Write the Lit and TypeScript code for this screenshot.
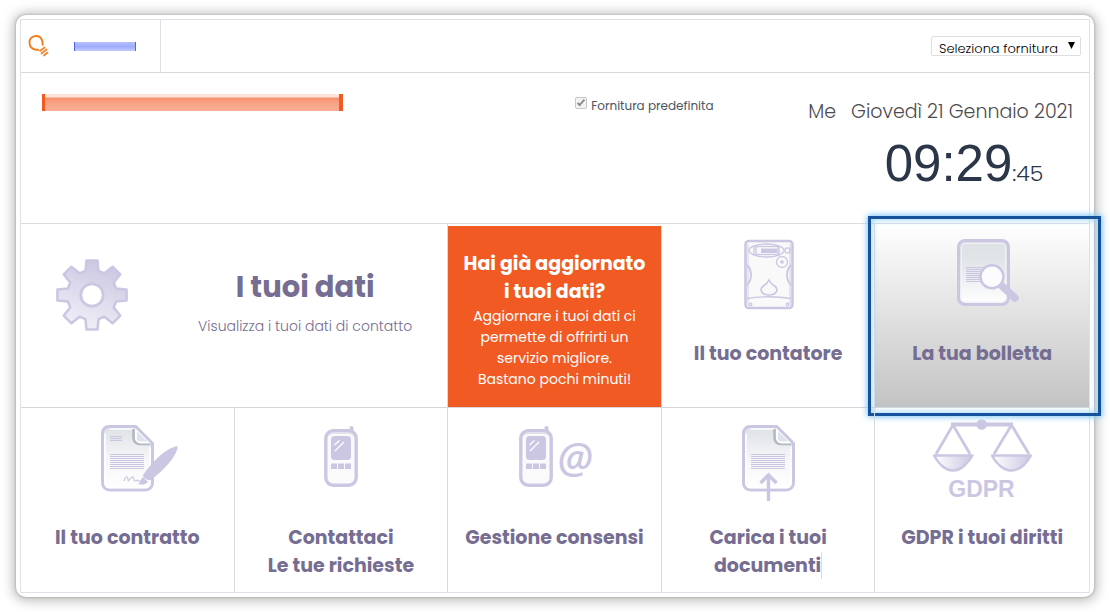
import { LitElement, html, svg, css, nothing } from "lit";
import { customElement, property } from "lit/decorators.js";

const INK = "#cbc7e3";

const gearTeeth = [0, 45, 90, 135, 180, 225, 270, 315];

const gearPath = (() => {
  const pts: string[] = [];
  for (const a of gearTeeth) {
    for (const [r, d] of [[25, -15], [35, -9], [35, 9], [25, 15]]) {
      const t = ((a + d) * Math.PI) / 180;
      pts.push(`${(37 + r * Math.sin(t)).toFixed(1)} ${(37 - r * Math.cos(t)).toFixed(1)}`);
    }
  }
  return `M${pts.join("L")}Z`;
})();

const gear = html`<svg width="74" height="74" viewBox="0 0 74 74" aria-hidden="true">
  <defs>
    <linearGradient id="gg" x1="0.7" y1="0" x2="0.35" y2="1">
      <stop offset="0" stop-color="#c9c5e1" />
      <stop offset="1" stop-color="#f1f0f7" />
    </linearGradient>
  </defs>
  <path d=${gearPath} fill="url(#gg)" stroke=${INK} stroke-width="2.5" stroke-linejoin="round" />
  <circle cx="37" cy="37" r="11.2" fill="#fff" stroke=${INK} stroke-width="2.8" />
</svg>`;

const lines = (x: number, w: number, y: number, n: number) =>
  Array.from({ length: n }, (_, i) => svg`<path d="M${x} ${y + i * 2}h${w}" stroke=${INK} stroke-width="1.1" />`);

const sheet = (x: number) => svg`
  <defs>
    <linearGradient id="sg" x1="0.2" y1="0" x2="0.2" y2="1">
      <stop offset="0" stop-color="#dde1e5" /><stop offset=".55" stop-color="#f7f7f9" /><stop offset="1" stop-color="#fff" />
    </linearGradient>
  </defs>
  <g transform="translate(${x} 9)">
    <path d="M8 1.5H34.500L51.500 18.500V58a7 7 0 0 1-7 7H8.500a7 7 0 0 1-7-7V8a6.500 6.500 0 0 1 6.500-6.500z" fill="url(#sg)" stroke=${INK} stroke-width="3" />
    <path d="M8.500 4H33M4 8.500V57a5 5 0 0 0 5 5.500H44a5 5 0 0 0 5-5V22" fill="none" stroke="#fff" stroke-width="1.500" />
    <path d="M32.500 4v9a6 6 0 0 0 6 6h11" fill="none" stroke="#98a4af" stroke-width="2.500" opacity=".7" />
    <path d="M35 4v9a4.500 4.500 0 0 0 4.500 4.500H49z" fill="#dfe2ea" stroke="#fff" stroke-width="1.800" />
    <path d="M34.500 1.500L51.500 18.500" stroke=${INK} stroke-width="2.500" />
  </g>`;

const phone = (x: number) => svg`
  <g transform="translate(${x} 10)">
    <rect x="25.500" y="0" width="4" height="8" rx="2" fill=${INK} />
    <rect x="1.800" y="4.800" width="30.400" height="54.400" rx="7.500" fill="#fafafb" stroke=${INK} stroke-width="3.400" />
    <path d="M5 10q1-2.500 4-2.500h16q3 0 4 2.500" fill="none" stroke="#e1dfec" stroke-width="1" />
    <rect x="7" y="10" width="20" height="24" rx="3.500" fill=${INK} />
    <path d="M10.500 19l5-4.500M11 25l9-9" stroke="#fff" stroke-width="1.300" />
    <path d="M7 37.500h6v5.500H7zM14 37.500h6v5.500h-6zM21 37.500h6v5.500h-6z" fill=${INK} />
  </g>`;

const contract = svg`${sheet(29)}
  ${lines(38, 12, 20.5, 3)}${lines(38, 34, 38.5, 8)}
  <path d="M52 65c1-4 4-6 4-2 0 5 3-3 5-2s0 4 2 4 2-2 4 0 4 1 5 0" fill="none" stroke=${INK} stroke-width="1.200" />
  <path d="M66 68c3-1 1-3 5-7l5 5c-3 3-6 3-10 2z" fill=${INK} />
  <path d="M71 59C79 48 90 35 103 30.500Q106 29.500 105.500 33C102 44 90 55 79 64Q76 65 73 62.500Q70.500 60.500 71 59z" fill=${INK} />`;

const upload = svg`${sheet(29)}${lines(38, 34, 38.5, 8)}
  <path d="M55.500 85V59M47.500 67L55.500 59l8 8" fill="none" stroke=${INK} stroke-width="3.400" />`;

const contact = phone(38);

const consent = svg`${phone(20)}<text x="76" y="57" text-anchor="middle" class="at">@</text>`;

const scales = svg`
  <defs><linearGradient id="pg"><stop offset="0" stop-color="#fff" /><stop offset="1" stop-color=${INK} /></linearGradient></defs>
  <path d="M24 8.500H86" stroke=${INK} stroke-width="4" />
  <circle cx="54.700" cy="8.500" r="5.300" fill=${INK} />
  <path d="M9 38L26 9L43 38M67 38L84.500 9L102 38" fill="none" stroke=${INK} stroke-width="2.800" />
  <path d="M7 39.500H45.500Q43 44 38 49Q26 60 14 49Q10 45 7 39.500z" fill="url(#pg)" stroke=${INK} stroke-width="2.400" stroke-linejoin="round" />
  <path d="M65 39.500H104Q101 45 97 49Q84.500 60 72 49Q67 44 65 39.500z" fill="url(#pg)" stroke=${INK} stroke-width="2.400" stroke-linejoin="round" />
  <text x="54.500" y="81" text-anchor="middle" class="gdpr">GDPR</text>`;

const meter = svg`
  <g fill="none" stroke=${INK} stroke-width="1.300">
    <rect x="32.500" y="9" width="47" height="67" rx="3.500" fill="#f9f9fa" stroke-width="2.600" />
    <path d="M35 12V73M77 12V73" stroke-width=".8" />
    <ellipse cx="53.500" cy="18.500" rx="17.500" ry="6.500" />
    <path d="M41 14v9M66 14v9" />
    <rect x="43" y="14.500" width="22" height="8" />
    <circle cx="74.500" cy="18.500" r="2.600" />
    <circle cx="69" cy="30" r="5.500" />
    <path d="M34 33q4 4 4 10t-4 10M78 33q-4 4-4 10t4 10" stroke-width="1.800" />
    <path d="M56 48q1.500 3.500 5 5.500c5 3 3.500 9.500-5 9.500s-10-6.500-5-9.500q3.500-2 5-5.500z" stroke-width="1.600" />
    <path d="M34 66.500q22-3.500 44 0" />
    <circle cx="37.500" cy="72.500" r="1.300" /><circle cx="74.500" cy="72.500" r="1.300" />
  </g>
  <rect x="48" y="16.500" width="16" height="4.500" fill=${INK} />
  <circle cx="69" cy="30" r="1.800" fill=${INK} />`;

const bill = svg`
  <defs>
    <linearGradient id="bg" x1="0" y1="0" x2="0" y2="1">
      <stop offset="0" stop-color="#dde1e4" /><stop offset=".35" stop-color="#e3e6e9" /><stop offset="1" stop-color="#fff" />
    </linearGradient>
  </defs>
  <rect x="31.600" y="8.600" width="49.800" height="63.800" rx="6.500" fill="url(#bg)" stroke=${INK} stroke-width="3.200" />
  <rect x="34.300" y="11.300" width="44.400" height="58.400" rx="4" fill="none" stroke="#f6f6f8" stroke-width="1" />
  ${lines(39, 18, 35.5, 8)}
  <path d="M75 54L88 66" stroke=${INK} stroke-width="7.500" stroke-linecap="round" />
  <circle cx="65" cy="44.700" r="11.500" fill="#fcfcfe" stroke=${INK} stroke-width="2.600" />`;

@customElement("service-tile")
class ServiceTile extends LitElement {
  @property({ attribute: false }) icon: unknown = nothing;
  @property({ attribute: false }) heading: string[] = [];
  @property({ type: Boolean, reflect: true }) active = false;
  @property({ type: Boolean }) caret = false;

  static styles = css`
    :host { display: block; position: relative; }
    .tile {
      display: flex; flex-direction: column; align-items: center; gap: 13px;
      box-sizing: border-box; height: 100%; padding-top: 8px;
      color: #756d92; text-decoration: none;
    }
    :host([active]) .tile { background: linear-gradient(#fff, #c3c3c3); }
    .title { margin: 0; font: 700 19px/28px Poppins, Inter, sans-serif; text-align: center; }
    .line { display: block; }
    .caret { border-right: 1px solid #dcdce2; }
    .at { font: italic 500 41px "Noto Sans", sans-serif; fill: #cbc7e3; }
    .gdpr { font: 700 23px "Liberation Sans", sans-serif; fill: #cbc7e3; }
    .ring {
      position: absolute; inset: -8px -12px -9px -7px;
      border: 3px solid #15529c; pointer-events: none;
      box-shadow: 0 0 6px 1px #7cc4f5, inset 0 0 6px 1px #9fd4f8;
    }
  `;

  render() {
    const last = this.heading.length - 1;
    return html`
      <a class="tile" href="#">
        <svg width="110" height="95" viewBox="0 0 110 95" aria-hidden="true">${this.icon}</svg>
        <h2 class="title">
          ${this.heading.map((t, i) => html`<span class="line"><span class=${this.caret && i === last ? "caret" : ""}>${t}</span></span>`)}
        </h2>
      </a>
      ${this.active ? html`<div class="ring"></div>` : nothing}
    `;
  }
}

@customElement("app-root")
class AppRoot extends LitElement {
  static styles = css`
    :host {
      display: block; box-sizing: border-box; padding: 15px 16px 16px;
      background: #fff; font-family: Poppins, Inter, sans-serif;
    }
    .card {
      padding: 4px; border-radius: 10px; background: #fff;
      box-shadow: 0 0 2px 1px rgba(0, 0, 0, 0.12), 0 1px 12px 3px rgba(0, 0, 0, 0.26);
    }
    .frame { border: 1px solid #dfe0e8; }
    .top { display: flex; align-items: stretch; height: 52px; border-bottom: 1px solid #d9d9dc; }
    .brand {
      display: flex; align-items: center; gap: 24px; box-sizing: border-box;
      width: 140px; padding-left: 7px; border-right: 1px solid #dfe0e6;
    }
    .name { width: 62px; height: 9px; border: solid #4c66e8; border-width: 0 1px; box-sizing: border-box;
      background: linear-gradient(#b6c0fc, #9dacfb 50%, #c3cbfd); }
    .supply { position: relative; align-self: center; margin: 0 8px 0 auto; }
    .select {
      display: block; appearance: none; box-sizing: border-box; width: 150px; height: 20px; margin: 0;
      padding: 4px 20px 0 7px; border: 1px solid #dedede; border-radius: 2px; background: #fff;
      color: #000; font: 300 13px/15px Poppins, Inter, sans-serif;
    }
    .arrow { position: absolute; right: 6px; top: 5px; pointer-events: none; }
    .hero { display: flex; align-items: flex-start; box-sizing: border-box; height: 151px; padding: 21px 16px 0 21px;
      border-bottom: 1px solid #dcdde1; }
    .address { flex: 1; }
    .masked { width: 301px; height: 17px; box-sizing: border-box; border: solid #f15a22; border-width: 0 4px 0 3px;
      background: linear-gradient(#fde3da 0 3px, #f68f6d 4px, #f8a386 9px, #f9ae94); }
    .default { display: flex; align-items: flex-start; gap: 4px; width: 233px; padding-top: 3px;
      color: #4a5560; font-size: 12px; font-weight: 400; line-height: 18px; }
    .box {
      appearance: none; position: relative; width: 12px; height: 12px; margin: 0; box-sizing: border-box;
      border: 1px solid #c8c8c8; border-radius: 2px; background: #f3f3f3;
    }
    .box::after {
      content: ""; position: absolute; left: 3px; top: 0; width: 2px; height: 6px;
      border: solid #8d8d8d; border-width: 0 2px 2px 0; transform: rotate(42deg);
    }
    .now { display: flex; gap: 15px; padding-top: 4px; color: #4c4c50; font-size: 19px; font-weight: 300; line-height: 28px; }
    .clock { text-align: center; }
    .time { color: #2b3648; line-height: 52px; margin-top: 12px; padding-left: 4px; }
    .hm { font: 400 51px/52px "Liberation Sans", sans-serif; }
    .sec { font-size: 22px; font-weight: 300; }
    .grid { display: grid; grid-template-columns: repeat(5, minmax(0, 1fr)); grid-auto-rows: minmax(184px, auto); }
    .cell { box-sizing: border-box; border-right: 1px solid #d9d9dd; }
    .row1 { border-bottom: 1px solid #d6d6da; }
    .end { border-right: 0; }
    .wide {
      grid-column: span 2; display: grid; grid-template-columns: 1fr 2fr; justify-items: center;
      color: #756d92; text-decoration: none; text-align: center;
    }
    .gear { padding-top: 34px; }
    .copy { padding-top: 43px; }
    .big { margin: 0 0 9px; font-size: 29px; font-weight: 700; line-height: 40px; }
    .sub { margin: 0; font-size: 14px; font-weight: 300; line-height: 20px; }
    .promo {
      margin-top: 2px; padding: 24px 10px 0; background: #f15a22; color: #fff;
      text-align: center; text-decoration: none;
    }
    .ask { margin: 0; font-size: 19px; font-weight: 700; line-height: 28px; }
    .why { margin: 0; font-size: 14px; line-height: 21px; }
  `;

  render() {
    return html`
      <main class="card">
        <div class="frame">
          <header class="top">
            <div class="brand">
              <svg width="22" height="22" viewBox="0 0 22 22" aria-hidden="true">
                <path d="M11 14.800H8Q1.500 13.500 1.500 7.500A6.500 6.500 0 0 1 14 5Q14.500 7 14.800 10.500" fill="none" stroke="#ee7d1a" stroke-width="1.900" />
                <path d="M12 16L16.500 12.500M13.500 18.500L18.500 14.500M16 20.500L19.500 17.500" stroke="#ee8a3a" stroke-width="1.900" stroke-linecap="round" />
              </svg>
              <span class="name"></span>
            </div>
            <div class="supply">
              <select class="select" aria-label="Seleziona fornitura"><option>Seleziona fornitura</option></select>
              <svg class="arrow" width="7" height="8" viewBox="0 0 7 8" aria-hidden="true"><path d="M0 1h7L3.500 8z" fill="#000" /></svg>
            </div>
          </header>
          <section class="hero">
            <div class="address"><div class="masked"></div></div>
            <label class="default"><input class="box" type="checkbox" checked disabled />Fornitura predefinita</label>
            <div class="now">
              <span>Me</span>
              <div class="clock">
                <div>Giovedì 21 Gennaio 2021</div>
                <div class="time"><span class="hm">09:29</span><span class="sec">:45</span></div>
              </div>
            </div>
          </section>
          <nav class="grid">
            <a class="cell row1 wide" href="#">
              <div class="gear">${gear}</div>
              <div class="copy">
                <h2 class="big">I tuoi dati</h2>
                <p class="sub">Visualizza i tuoi dati di contatto</p>
              </div>
            </a>
            <a class="cell row1 promo" href="#">
              <h2 class="ask">Hai già aggiornato<br />i tuoi dati?</h2>
              <p class="why">Aggiornare i tuoi dati ci<br />permette di offrirti un<br />servizio migliore.<br />Bastano pochi minuti!</p>
            </a>
            <service-tile class="cell row1" .icon=${meter} .heading=${["Il tuo contatore"]}></service-tile>
            <service-tile class="cell row1 end" active .icon=${bill} .heading=${["La tua bolletta"]}></service-tile>
            <service-tile class="cell" .icon=${contract} .heading=${["Il tuo contratto"]}></service-tile>
            <service-tile class="cell" .icon=${contact} .heading=${["Contattaci", "Le tue richieste"]}></service-tile>
            <service-tile class="cell" .icon=${consent} .heading=${["Gestione consensi"]}></service-tile>
            <service-tile class="cell" caret .icon=${upload} .heading=${["Carica i tuoi", "documenti"]}></service-tile>
            <service-tile class="cell end" .icon=${scales} .heading=${["GDPR i tuoi diritti"]}></service-tile>
          </nav>
        </div>
      </main>
    `;
  }
}
